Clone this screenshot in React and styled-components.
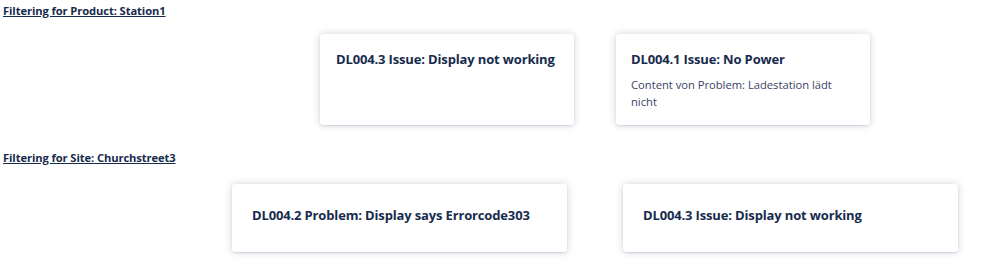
import React from "react";
import styled, { createGlobalStyle } from "styled-components";

const Global = createGlobalStyle`
  html, body { margin: 0; padding: 0; background: #fff; }
  body { font-family: "Open Sans", "Noto Sans", sans-serif; }
`;

const Page = styled.div`
  width: 999px;
  height: 269px;
  overflow: hidden;
  padding: 3px 0 0 3px;
  box-sizing: border-box;
`;

const Heading = styled.h4`
  margin: 0;
  font-size: 11.2px;
  font-weight: 700;
  color: #172b4d;
  text-decoration: underline;
  line-height: 16px;
  letter-spacing: -0.1px;
`;

const Row = styled.div`
  display: flex;
  gap: ${(p) => p.$gap}px;
  margin-left: ${(p) => p.$offset}px;
  margin-top: ${(p) => p.$top}px;
  margin-bottom: ${(p) => p.$bottom}px;
`;

const Card = styled.div`
  width: ${(p) => p.$w}px;
  height: ${(p) => p.$h}px;
  box-sizing: border-box;
  padding: ${(p) => p.$pad};
  background: #fff;
  border-radius: 3px;
  box-shadow: 0 0 8px rgba(9, 30, 66, 0.18), 0 1px 2px rgba(9, 30, 66, 0.12);
`;

const Title = styled.div`
  font-size: 13px;
  font-weight: 700;
  color: #172b4d;
  line-height: 18px;
  letter-spacing: -0.15px;
`;

const Body = styled.div`
  margin-top: 9px;
  font-size: 11.2px;
  color: #3b4263;
  line-height: 16.5px;
  width: 210px;
`;

export default function App() {
  return (
    <Page>
      <Global />
      <Heading>Filtering for Product: Station1</Heading>
      <Row $gap={42} $offset={317} $top={15} $bottom={25}>
        <Card $w={254} $h={91} $pad="16px 16px">
          <Title>DL004.3 Issue: Display not working</Title>
        </Card>
        <Card $w={254} $h={91} $pad="16px 15px">
          <Title>DL004.1 Issue: No Power</Title>
          <Body>Content von Problem: Ladestation lädt nicht</Body>
        </Card>
      </Row>
      <Heading>Filtering for Site: Churchstreet3</Heading>
      <Row $gap={56} $offset={229} $top={18} $bottom={0}>
        <Card $w={335} $h={68} $pad="22px 20px">
          <Title>DL004.2 Problem: Display says Errorcode303</Title>
        </Card>
        <Card $w={335} $h={68} $pad="22px 20px">
          <Title>DL004.3 Issue: Display not working</Title>
        </Card>
      </Row>
    </Page>
  );
}
